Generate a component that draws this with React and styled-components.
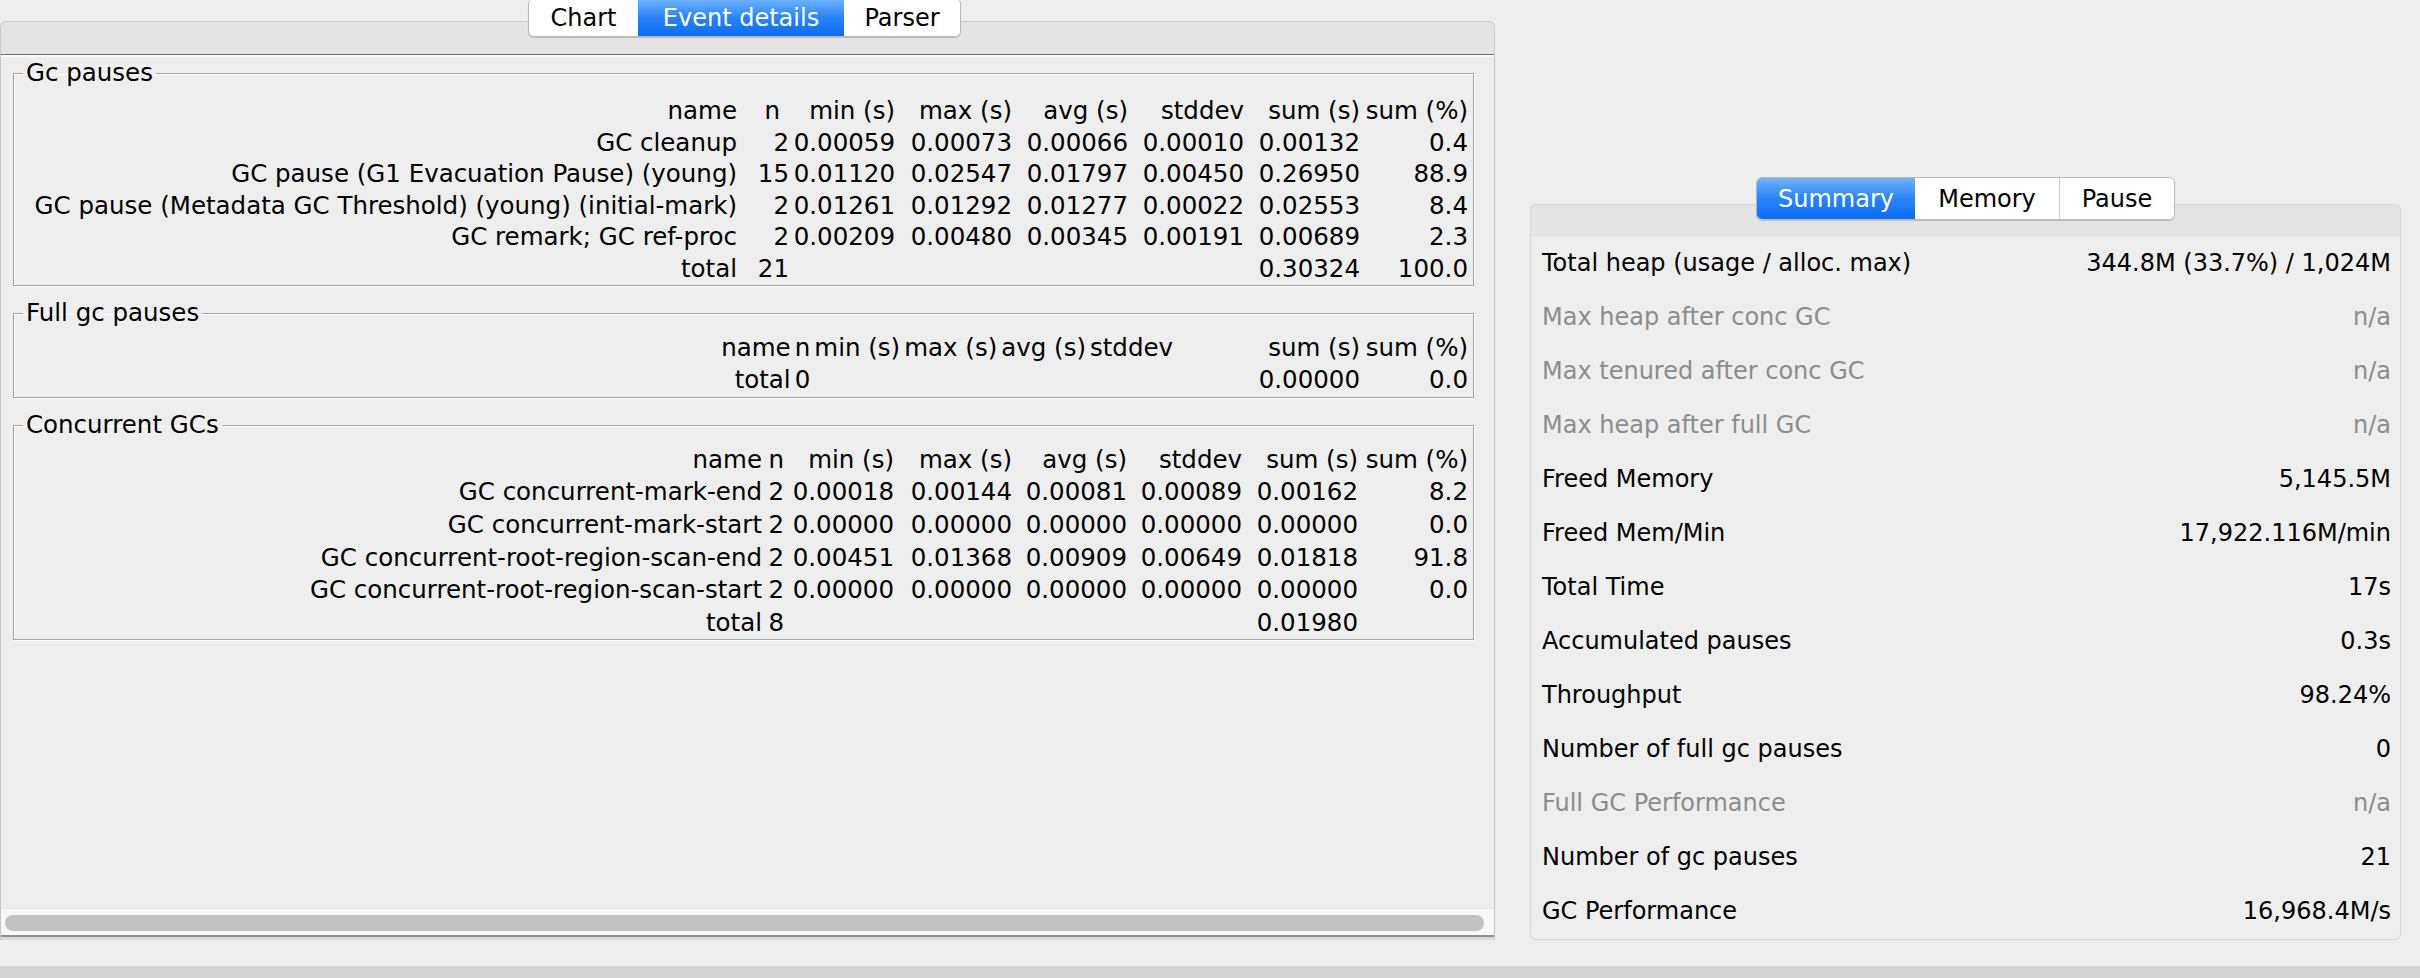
import React from 'react'
import styled, {createGlobalStyle} from 'styled-components'

const FONT = `"DejaVu Sans", "Open Sans", sans-serif`

const GlobalStyle = createGlobalStyle`
  html, body {
    margin: 0;
    padding: 0;
    background: #eeeeee;
  }
  body {
    font-family: ${FONT};
    font-size: 24.5px;
    color: #000;
    overflow: hidden;
  }
`

const Window = styled.div`
  width: 2420px;
  height: 978px;
  display: flex;
  flex-direction: column;
  background: #eeeeee;
`

const Main = styled.div`
  flex: 1;
  min-height: 0;
  display: flex;
  align-items: flex-end;
  gap: 35px;
  padding: 0 19px 26px 0;
`

const StatusStrip = styled.div`
  height: 12px;
  background: #d4d4d4;
`

const Pane = styled.div`
  display: flex;
  flex-direction: column;
  width: ${p => p.$width}px;
  align-self: ${p => (p.$stretch ? 'stretch' : 'flex-end')};
`

const TabBar = styled.div`
  position: relative;
  z-index: 1;
  display: flex;
  align-self: center;
  height: ${p => p.$height}px;
  margin: ${p => p.$top}px ${p => p.$nudge}px -16px 0;
  border: 1px solid #b9b9b9;
  border-radius: 6px;
  background: #fff;
  box-shadow: 0 1px 1px rgba(0, 0, 0, 0.18);
  overflow: hidden;
  font-size: 24px;
`

const Tab = styled.div`
  display: flex;
  align-items: center;
  justify-content: center;
  width: ${p => p.$width}px;
  color: ${p => (p.$active ? '#fff' : '#000')};
  background: ${p =>
    p.$active ? 'linear-gradient(#70b2fb, #2a84f7 50%, #0d6bf5)' : '#fff'};
  border-left: ${p => (p.$first || p.$active || p.$afterActive ? 'none' : '1px solid #cfcfcf')};
  white-space: nowrap;
`

const Frame = styled.div`
  flex: 1;
  display: flex;
  flex-direction: column;
  border: 1px solid #c9c9c9;
  border-bottom: none;
  border-radius: 6px 6px 0 0;
  background: #e4e4e4;
  padding-top: 32px;
`

const ScrollPane = styled.div`
  flex: 1;
  display: flex;
  flex-direction: column;
  border-top: 1px solid #6e6e6e;
  border-bottom: 2px solid #8f8f8f;
  box-shadow: 0 3px 3px -1px rgba(0, 0, 0, 0.08);
  margin-bottom: 3px;
`

const Viewport = styled.div`
  flex: 1;
  display: flex;
  flex-direction: column;
  gap: 11px;
  padding: 2px 20px 0 12px;
  background: #eeeeee;
  box-shadow: inset 0 2px 0 #fafafa;
  overflow: hidden;
`

const HScroll = styled.div`
  height: 27px;
  box-sizing: border-box;
  padding: 6px 10px 5px 4px;
  background: #f8f8f8;
  border-top: 1px solid #e6e6e6;
`

const Thumb = styled.div`
  height: 16px;
  border-radius: 8px;
  background: #c2c2c2;
`

const Group = styled.fieldset`
  margin: 0;
  min-width: 0;
  padding: 0 5px ${p => p.$bottom}px 0;
  border: 1px solid #a3a3a3;
  box-shadow: 1px 1px 0 #fff, inset 1px 1px 0 #fff;
`

const Legend = styled.legend`
  margin-left: 9px;
  padding: 0 3px;
  line-height: 32px;
`

const Table = styled.div`
  display: grid;
  grid-template-columns: ${p => p.$cols};
  grid-auto-rows: ${p => p.$row}px;
  margin-top: ${p => p.$top}px;
  align-items: center;
`

const Cell = styled.div`
  text-align: right;
  white-space: nowrap;
  line-height: 29px;
  padding-left: ${p => p.$gap}px;
  padding-right: ${p => p.$pad || 0}px;
`

const SummaryPanel = styled.div`
  display: flex;
  flex-direction: column;
  border: 1px solid #d4d4d4;
  border-radius: 6px;
  background: #e4e4e4;
  padding-top: 32px;
`

const SummaryBody = styled.div`
  display: flex;
  flex-direction: column;
  background: #eeeeee;
  border-radius: 0 0 6px 6px;
`

const SummaryRow = styled.div`
  height: 54px;
  box-sizing: border-box;
  display: flex;
  align-items: center;
  justify-content: space-between;
  padding: 0 9px 3px 11px;
  font-size: 24px;
  color: ${p => (p.$disabled ? '#8c8c8c' : '#000')};
  white-space: nowrap;
`

const HEADER = ['name', 'n', 'min (s)', 'max (s)', 'avg (s)', 'stddev', 'sum (s)', 'sum (%)']

const gcPauses = [
  ['GC cleanup', '2', '0.00059', '0.00073', '0.00066', '0.00010', '0.00132', '0.4'],
  ['GC pause (G1 Evacuation Pause) (young)', '15', '0.01120', '0.02547', '0.01797', '0.00450', '0.26950', '88.9'],
  ['GC pause (Metadata GC Threshold) (young) (initial-mark)', '2', '0.01261', '0.01292', '0.01277', '0.00022', '0.02553', '8.4'],
  ['GC remark; GC ref-proc', '2', '0.00209', '0.00480', '0.00345', '0.00191', '0.00689', '2.3'],
  ['total', '21', '', '', '', '', '0.30324', '100.0'],
]

const fullPauses = [['total', '0', '', '', '', '', '0.00000', '0.0']]

const concurrent = [
  ['GC concurrent-mark-end', '2', '0.00018', '0.00144', '0.00081', '0.00089', '0.00162', '8.2'],
  ['GC concurrent-mark-start', '2', '0.00000', '0.00000', '0.00000', '0.00000', '0.00000', '0.0'],
  ['GC concurrent-root-region-scan-end', '2', '0.00451', '0.01368', '0.00909', '0.00649', '0.01818', '91.8'],
  ['GC concurrent-root-region-scan-start', '2', '0.00000', '0.00000', '0.00000', '0.00000', '0.00000', '0.0'],
  ['total', '8', '', '', '', '', '0.01980', ''],
]

const groups = [
  {title: 'Gc pauses', cols: '1fr 52px 106px 117px 116px 116px 116px 108px', row: 31.5, top: 6, bottom: 1, gap: 0, nPad: 9, rows: gcPauses},
  {title: 'Full gc pauses', cols: '1fr auto auto auto auto auto 187px 108px', row: 32, top: 2, bottom: 2, gap: 4, nPad: 0, rows: fullPauses},
  {title: 'Concurrent GCs', cols: '1fr 22px 110px 118px 115px 115px 116px 110px', row: 32.6, top: 2, bottom: 0, gap: 0, nPad: 0, rows: concurrent},
]

const summary = [
  ['Total heap (usage / alloc. max)', '344.8M (33.7%) / 1,024M'],
  ['Max heap after conc GC', 'n/a', true],
  ['Max tenured after conc GC', 'n/a', true],
  ['Max heap after full GC', 'n/a', true],
  ['Freed Memory', '5,145.5M'],
  ['Freed Mem/Min', '17,922.116M/min'],
  ['Total Time', '17s'],
  ['Accumulated pauses', '0.3s'],
  ['Throughput', '98.24%'],
  ['Number of full gc pauses', '0'],
  ['Full GC Performance', 'n/a', true],
  ['Number of gc pauses', '21'],
  ['GC Performance', '16,968.4M/s'],
]

const Tabs = ({tabs, active, height, top, nudge = 0}) => (
  <TabBar $height={height} $top={top} $nudge={nudge}>
    {tabs.map(([label, width], i) => (
      <Tab
        key={label}
        $width={width}
        $active={i === active}
        $first={i === 0}
        $afterActive={i === active + 1}
      >
        {label}
      </Tab>
    ))}
  </TabBar>
)

const StatsGroup = ({group}) => (
  <Group $bottom={group.bottom}>
    <Legend>{group.title}</Legend>
    <Table $cols={group.cols} $row={group.row} $top={group.top}>
      {HEADER.map((h, i) => (
        <Cell key={h} $gap={i ? group.gap : 0} $pad={i === 1 ? group.nPad : 0}>
          {h}
        </Cell>
      ))}
      {group.rows.map(row =>
        row.map((value, i) => (
          <Cell key={row[0] + i} $gap={i ? group.gap : 0}>
            {value}
          </Cell>
        )),
      )}
    </Table>
  </Group>
)

const App = () => (
  <Window>
    <GlobalStyle />
    <Main>
      <Pane $width={1495} $stretch>
        <Tabs
          tabs={[['Chart', 109], ['Event details', 206], ['Parser', 116]]}
          active={1}
          height={37}
          top={-2}
          nudge={6}
        />
        <Frame>
          <ScrollPane>
            <Viewport>
              {groups.map(g => (
                <StatsGroup key={g.title} group={g} />
              ))}
            </Viewport>
            <HScroll>
              <Thumb />
            </HScroll>
          </ScrollPane>
        </Frame>
      </Pane>
      <Pane $width={871}>
        <Tabs
          tabs={[['Summary', 158], ['Memory', 144], ['Pause', 114]]}
          active={0}
          height={41}
          top={0}
        />
        <SummaryPanel>
          <SummaryBody>
            {summary.map(([label, value, disabled]) => (
              <SummaryRow key={label} $disabled={disabled}>
                <span>{label}</span>
                <span>{value}</span>
              </SummaryRow>
            ))}
          </SummaryBody>
        </SummaryPanel>
      </Pane>
    </Main>
    <StatusStrip />
  </Window>
)

export default App
